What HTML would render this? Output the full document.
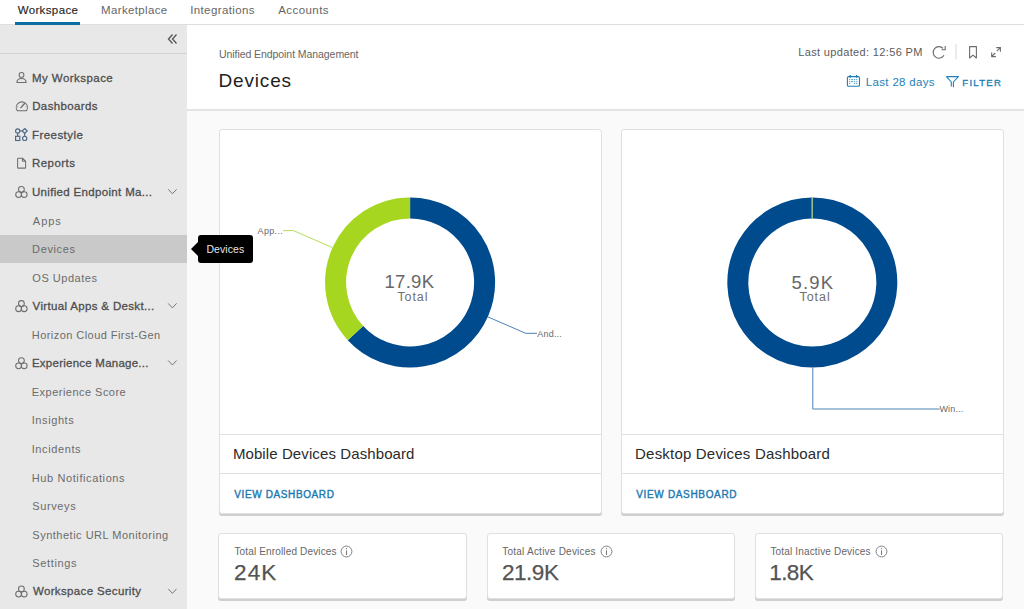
<!DOCTYPE html>
<html><head><meta charset="utf-8"><style>
*{margin:0;padding:0;box-sizing:border-box}
html,body{width:1024px;height:609px;overflow:hidden;background:#fafafa;font-family:"Liberation Sans",sans-serif}
.a{position:absolute}
.t{position:absolute;white-space:nowrap}
#nav{position:absolute;left:0;top:0;width:1024px;height:25px;background:#fff;border-bottom:1px solid #dedede}
#ul{position:absolute;left:15px;top:22px;width:65px;height:3px;background:#0b6fa4}
#side{position:absolute;left:0;top:25px;width:187px;height:584px;background:#e8e8e8}
#colb{position:absolute;left:0;top:53px;width:187px;height:1px;background:#d2d2d2}
#sel{position:absolute;left:0;top:234.6px;width:187px;height:28.5px;background:#c9c9c9}
#hdr{position:absolute;left:187px;top:25px;width:837px;height:86px;background:#fff;border-bottom:2px solid #e3e3e3}
.card{position:absolute;background:#fff;border:1px solid #e0e0e0;border-radius:3px;box-shadow:0 2px 0 #cfcfcf}
.hl{position:absolute;height:1px;background:#e2e2e2}
#tip{position:absolute;left:198px;top:235.2px;width:55px;height:28px;background:#000;border-radius:3px}
#tiparr{position:absolute;left:191px;top:242px;width:0;height:0;border-top:7px solid transparent;border-bottom:7px solid transparent;border-right:7.5px solid #000}
</style></head><body>
<div id="nav"></div><div id="ul"></div>
<div id="side"></div><div id="colb"></div><div id="sel"></div>
<svg class="a" style="left:166px;top:33px" width="13" height="12" viewBox="0 0 13 12"><path d="M6.5 1.5 L2.5 6 L6.5 10.5 M10.5 1.5 L6.5 6 L10.5 10.5" fill="none" stroke="#555" stroke-width="1.3"/></svg>
<svg class="a" style="left:0;top:0" width="187" height="609"><circle cx="21.5" cy="74.90" r="2.4" fill="none" stroke="#6e6e6e" stroke-width="1.05"/><path d="M16.9 82.40 C16.9 79.70 19 78.40 21.5 78.40 C24 78.40 26.1 79.70 26.1 82.40 V82.40 H16.9 Z" fill="none" stroke="#6e6e6e" stroke-width="1.05" stroke-linejoin="round"/><path d="M17.4 110.84 A5.6 5.6 0 1 1 26.3 110.84 Z" fill="none" stroke="#6e6e6e" stroke-width="1.05" stroke-linejoin="round"/><path d="M20.9 107.64 L24.3 103.84" stroke="#6e6e6e" stroke-width="1.4" stroke-linecap="round"/><path d="M21.85 101.84 V102.74 M17.2 106.84 H18.2 M25.5 106.84 H26.5 M18.4 103.44 L19 104.04 M25.3 103.44 L24.7 104.04" stroke="#6e6e6e" stroke-width="0.8"/><g fill="none" stroke="#4b6984" stroke-width="1.15"><circle cx="17.7" cy="130.98" r="2.1"/><path d="M24.7 128.48 L27.2 130.98 L24.7 133.48 L22.2 130.98 Z"/><rect x="15.6" y="136.28" width="4.2" height="4.2"/><circle cx="24.7" cy="138.38" r="2.1"/><path d="M19.8 130.98 H22.2 M17.7 133.08 V136.28 M24.7 133.48 V136.28"/></g><path d="M18.3 158.32 H22.6 L25.6 161.32 V167.42 Q25.6 168.12 24.9 168.12 H18.3 Q17.6 168.12 17.6 167.42 V159.02 Q17.6 158.32 18.3 158.32 Z M22.4 158.32 V160.62 Q22.4 161.32 23.1 161.32 H25.6" fill="none" stroke="#6e6e6e" stroke-width="1.05"/><g fill="none" stroke="#6e6e6e" stroke-width="1.05"><circle cx="21.4" cy="189.36" r="2.9"/><circle cx="18.6" cy="194.56" r="2.9"/><circle cx="24.2" cy="194.56" r="2.9"/></g><path d="M168.2 189.26 L172.4 193.76 L176.6 189.26" fill="none" stroke="#777" stroke-width="1"/><g fill="none" stroke="#6e6e6e" stroke-width="1.05"><circle cx="21.4" cy="303.52" r="2.9"/><circle cx="18.6" cy="308.72" r="2.9"/><circle cx="24.2" cy="308.72" r="2.9"/></g><path d="M168.2 303.42 L172.4 307.92 L176.6 303.42" fill="none" stroke="#777" stroke-width="1"/><g fill="none" stroke="#6e6e6e" stroke-width="1.05"><circle cx="21.4" cy="360.60" r="2.9"/><circle cx="18.6" cy="365.80" r="2.9"/><circle cx="24.2" cy="365.80" r="2.9"/></g><path d="M168.2 360.50 L172.4 365.00 L176.6 360.50" fill="none" stroke="#777" stroke-width="1"/><g fill="none" stroke="#6e6e6e" stroke-width="1.05"><circle cx="21.4" cy="588.92" r="2.9"/><circle cx="18.6" cy="594.12" r="2.9"/><circle cx="24.2" cy="594.12" r="2.9"/></g><path d="M168.2 588.82 L172.4 593.32 L176.6 588.82" fill="none" stroke="#777" stroke-width="1"/></svg>
<div id="hdr"></div>
<!-- header icons -->
<svg class="a" style="left:0;top:0" width="1024" height="110">
<g fill="none" stroke="#6c6c6c" stroke-width="1.1">
<path d="M944.0 55.3 A5.8 5.8 0 1 1 943.1 48.3"/>
<path d="M941.5 49.8 H945.2 V46"/>
<path d="M969.6 46.6 H976.4 V58 L973 55.1 L969.6 58 Z" stroke-linejoin="round"/>
<path d="M996.3 47.6 H1000.4 V51.8 M1000.2 47.8 L996.8 51.2 M991.7 52.4 V56.6 H995.9 M991.9 56.4 L995.3 53"/>
</g>
<rect x="955.4" y="44" width="1.1" height="15.5" fill="#dcdcdc"/>
<g fill="none" stroke="#1f7fb6" stroke-width="1.1">
<rect x="847.4" y="76.6" width="12.1" height="9.6" rx="1.3"/>
<path d="M850.2 75 V77.8 M856.6 75 V77.8" stroke-width="1.3"/>
<path d="M946.4 76.6 H958.4 L953.4 82 V87.2 M946.4 76.6 L951.3 82 V86.4" stroke-linejoin="round"/>
</g>
<g fill="#1f7fb6" opacity="0.75">
<rect x="849.1" y="79" width="1.1" height="1.1"/><rect x="851.3" y="79" width="1.8" height="1.1"/><rect x="854.1" y="79" width="1.1" height="1.1"/><rect x="856.2" y="79" width="1.1" height="1.1"/>
<rect x="849.1" y="81" width="1.1" height="1.1"/><rect x="851.3" y="81" width="1.8" height="1.1"/><rect x="854.1" y="81" width="1.1" height="1.1"/><rect x="856.2" y="81" width="1.1" height="1.1"/>
<rect x="849.1" y="82.9" width="1.1" height="1.1"/><rect x="854.1" y="82.9" width="1.1" height="1.1"/><rect x="856.2" y="82.9" width="1.1" height="1.1"/>
</g>
</svg>
<!-- cards -->
<div class="card" style="left:218.5px;top:129.3px;width:383px;height:384.5px"></div>
<div class="hl" style="left:219.5px;top:434.2px;width:381px"></div>
<div class="hl" style="left:219.5px;top:472.8px;width:381px"></div>
<div class="card" style="left:620.7px;top:129.3px;width:383px;height:384.5px"></div>
<div class="hl" style="left:621.7px;top:434.2px;width:381px"></div>
<div class="hl" style="left:621.7px;top:472.8px;width:381px"></div>
<div class="card" style="left:218.4px;top:533.3px;width:249px;height:65.8px"></div>
<div class="card" style="left:487.2px;top:533.3px;width:248px;height:65.8px"></div>
<div class="card" style="left:755.3px;top:533.3px;width:248px;height:65.8px"></div>
<svg class="a" style="left:0;top:0" width="1024" height="609"><path d="M410.10 207.90 A74.50 74.50 0 1 1 355.44 333.02" fill="none" stroke="#004b8d" stroke-width="21"/><path d="M355.44 333.02 A74.50 74.50 0 0 1 410.10 207.90" fill="none" stroke="#a6d620" stroke-width="21"/><path d="M283 230.6 H293.5 L332.2 247.5" fill="none" stroke="#b4dc5a" stroke-width="1"/><path d="M487.9 316.9 L525.7 333.3 H537" fill="none" stroke="#4f82b4" stroke-width="1"/><path d="M812.65 208.10 A74.50 74.50 0 1 1 812.00 208.10" fill="none" stroke="#004b8d" stroke-width="21"/><path d="M811.9 197.6 V219" stroke="#80b84a" stroke-width="1.2"/><path d="M812.8 367.5 V409 H939.7" fill="none" stroke="#4f82b4" stroke-width="1"/></svg>
<svg class="a" style="left:340.30px;top:545.20px" width="13" height="13" viewBox="0 0 13 13"><circle cx="6.5" cy="6.5" r="5.4" fill="none" stroke="#7a7a7a" stroke-width="0.95"/><path d="M6.5 5.4 V9.9" stroke="#7a7a7a" stroke-width="1.1"/><circle cx="6.5" cy="3.7" r="0.65" fill="#7a7a7a"/></svg><svg class="a" style="left:600.10px;top:545.20px" width="13" height="13" viewBox="0 0 13 13"><circle cx="6.5" cy="6.5" r="5.4" fill="none" stroke="#7a7a7a" stroke-width="0.95"/><path d="M6.5 5.4 V9.9" stroke="#7a7a7a" stroke-width="1.1"/><circle cx="6.5" cy="3.7" r="0.65" fill="#7a7a7a"/></svg><svg class="a" style="left:874.70px;top:545.20px" width="13" height="13" viewBox="0 0 13 13"><circle cx="6.5" cy="6.5" r="5.4" fill="none" stroke="#7a7a7a" stroke-width="0.95"/><path d="M6.5 5.4 V9.9" stroke="#7a7a7a" stroke-width="1.1"/><circle cx="6.5" cy="3.7" r="0.65" fill="#7a7a7a"/></svg><div id="tiparr"></div><div id="tip"></div>
<div class="t" id="nav1" style="left:17.65px;top:5.37px;font-size:11.50px;line-height:11.50px;font-weight:400;color:#262626;letter-spacing:0.370px;-webkit-text-stroke:0.15px #262626">Workspace</div>
<div class="t" id="nav2" style="left:101.07px;top:5.37px;font-size:11.50px;line-height:11.50px;font-weight:400;color:#666;letter-spacing:0.348px;">Marketplace</div>
<div class="t" id="nav3" style="left:190.15px;top:5.37px;font-size:11.50px;line-height:11.50px;font-weight:400;color:#666;letter-spacing:0.398px;">Integrations</div>
<div class="t" id="nav4" style="left:278.18px;top:5.37px;font-size:11.50px;line-height:11.50px;font-weight:400;color:#666;letter-spacing:0.446px;">Accounts</div>
<div class="t" id="h1" style="left:219.03px;top:49.41px;font-size:10.50px;line-height:10.50px;font-weight:400;color:#666;letter-spacing:-0.067px;">Unified Endpoint Management</div>
<div class="t" id="h2" style="left:218.47px;top:70.92px;font-size:19.00px;line-height:19.00px;font-weight:400;color:#222;letter-spacing:0.840px;">Devices</div>
<div class="t" id="h3" style="left:798.25px;top:46.89px;font-size:11.00px;line-height:11.00px;font-weight:400;color:#5c5c5c;letter-spacing:0.347px;">Last updated: 12:56 PM</div>
<div class="t" id="h4" style="left:865.87px;top:76.57px;font-size:11.50px;line-height:11.50px;font-weight:400;color:#1f7fb6;letter-spacing:0.321px;">Last 28 days</div>
<div class="t" id="h5" style="left:962.31px;top:78.26px;font-size:9.50px;line-height:9.50px;font-weight:400;color:#1f7fb6;letter-spacing:1.287px;-webkit-text-stroke:0.35px #1f7fb6">FILTER</div>
<div class="t" id="s0" style="left:31.92px;top:72.57px;font-size:11.50px;line-height:11.50px;font-weight:400;color:#4e4e4e;letter-spacing:0.454px;-webkit-text-stroke:0.3px #4e4e4e">My Workspace</div>
<div class="t" id="s1" style="left:32.20px;top:101.11px;font-size:11.50px;line-height:11.50px;font-weight:400;color:#4e4e4e;letter-spacing:0.375px;-webkit-text-stroke:0.3px #4e4e4e">Dashboards</div>
<div class="t" id="s2" style="left:31.96px;top:129.65px;font-size:11.50px;line-height:11.50px;font-weight:400;color:#4e4e4e;letter-spacing:0.453px;-webkit-text-stroke:0.3px #4e4e4e">Freestyle</div>
<div class="t" id="s3" style="left:31.96px;top:158.19px;font-size:11.50px;line-height:11.50px;font-weight:400;color:#4e4e4e;letter-spacing:0.455px;-webkit-text-stroke:0.3px #4e4e4e">Reports</div>
<div class="t" id="s4" style="left:31.91px;top:186.73px;font-size:11.50px;line-height:11.50px;font-weight:400;color:#4e4e4e;letter-spacing:0.333px;-webkit-text-stroke:0.3px #4e4e4e">Unified Endpoint Ma...</div>
<div class="t" id="s5" style="left:32.87px;top:215.69px;font-size:11.00px;line-height:11.00px;font-weight:400;color:#6b6b6b;letter-spacing:0.951px;">Apps</div>
<div class="t" id="s6" style="left:32.09px;top:244.23px;font-size:11.00px;line-height:11.00px;font-weight:400;color:#6b6b6b;letter-spacing:0.623px;">Devices</div>
<div class="t" id="s7" style="left:32.32px;top:272.77px;font-size:11.00px;line-height:11.00px;font-weight:400;color:#6b6b6b;letter-spacing:0.516px;">OS Updates</div>
<div class="t" id="s8" style="left:32.60px;top:300.89px;font-size:11.50px;line-height:11.50px;font-weight:400;color:#4e4e4e;letter-spacing:0.338px;-webkit-text-stroke:0.3px #4e4e4e">Virtual Apps &amp; Deskt...</div>
<div class="t" id="s9" style="left:31.82px;top:329.85px;font-size:11.00px;line-height:11.00px;font-weight:400;color:#6b6b6b;letter-spacing:0.441px;">Horizon Cloud First-Gen</div>
<div class="t" id="s10" style="left:31.96px;top:357.97px;font-size:11.50px;line-height:11.50px;font-weight:400;color:#4e4e4e;letter-spacing:0.240px;-webkit-text-stroke:0.3px #4e4e4e">Experience Manage...</div>
<div class="t" id="s11" style="left:31.82px;top:386.93px;font-size:11.00px;line-height:11.00px;font-weight:400;color:#6b6b6b;letter-spacing:0.471px;">Experience Score</div>
<div class="t" id="s12" style="left:31.70px;top:415.47px;font-size:11.00px;line-height:11.00px;font-weight:400;color:#6b6b6b;letter-spacing:0.592px;">Insights</div>
<div class="t" id="s13" style="left:31.70px;top:444.01px;font-size:11.00px;line-height:11.00px;font-weight:400;color:#6b6b6b;letter-spacing:0.609px;">Incidents</div>
<div class="t" id="s14" style="left:31.82px;top:472.55px;font-size:11.00px;line-height:11.00px;font-weight:400;color:#6b6b6b;letter-spacing:0.600px;">Hub Notifications</div>
<div class="t" id="s15" style="left:32.36px;top:501.09px;font-size:11.00px;line-height:11.00px;font-weight:400;color:#6b6b6b;letter-spacing:0.596px;">Surveys</div>
<div class="t" id="s16" style="left:32.36px;top:529.63px;font-size:11.00px;line-height:11.00px;font-weight:400;color:#6b6b6b;letter-spacing:0.498px;">Synthetic URL Monitoring</div>
<div class="t" id="s17" style="left:32.36px;top:558.17px;font-size:11.00px;line-height:11.00px;font-weight:400;color:#6b6b6b;letter-spacing:0.628px;">Settings</div>
<div class="t" id="s18" style="left:32.92px;top:586.29px;font-size:11.50px;line-height:11.50px;font-weight:400;color:#4e4e4e;letter-spacing:0.358px;-webkit-text-stroke:0.3px #4e4e4e">Workspace Security</div>
<div class="t" id="tipt" style="left:206.47px;top:244.01px;font-size:10.50px;line-height:10.50px;font-weight:400;color:#e6e6e6;letter-spacing:0.061px;">Devices</div>
<div class="t" id="c1a" style="left:384.43px;top:273.24px;font-size:18.50px;line-height:18.50px;font-weight:400;color:#676767;letter-spacing:0.314px;">17.9K</div>
<div class="t" id="c1b" style="left:397.40px;top:291.42px;font-size:12.50px;line-height:12.50px;font-weight:400;color:#707070;letter-spacing:0.923px;">Total</div>
<div class="t" id="c2a" style="left:791.61px;top:273.54px;font-size:18.50px;line-height:18.50px;font-weight:400;color:#676767;letter-spacing:1.155px;">5.9K</div>
<div class="t" id="c2b" style="left:799.40px;top:291.42px;font-size:12.50px;line-height:12.50px;font-weight:400;color:#707070;letter-spacing:1.007px;">Total</div>
<div class="t" id="l1" style="left:257.62px;top:226.78px;font-size:9.00px;line-height:9.00px;font-weight:400;color:#6a6a6a;letter-spacing:0.322px;">App...</div>
<div class="t" id="l2" style="left:537.33px;top:330.08px;font-size:9.00px;line-height:9.00px;font-weight:400;color:#6a6a6a;letter-spacing:0.182px;">And...</div>
<div class="t" id="l3" style="left:939.45px;top:405.38px;font-size:9.00px;line-height:9.00px;font-weight:400;color:#6a6a6a;letter-spacing:0.186px;">Win...</div>
<div class="t" id="ct1" style="left:232.88px;top:446.00px;font-size:15.00px;line-height:15.00px;font-weight:400;color:#2b2b2b;letter-spacing:0.101px;">Mobile Devices Dashboard</div>
<div class="t" id="ct2" style="left:635.09px;top:446.00px;font-size:15.00px;line-height:15.00px;font-weight:400;color:#2b2b2b;letter-spacing:0.194px;">Desktop Devices Dashboard</div>
<div class="t" id="vd1" style="left:234.22px;top:490.04px;font-size:10.00px;line-height:10.00px;font-weight:400;color:#1d7ab0;letter-spacing:0.616px;-webkit-text-stroke:0.4px #1d7ab0">VIEW DASHBOARD</div>
<div class="t" id="vd2" style="left:636.22px;top:490.04px;font-size:10.00px;line-height:10.00px;font-weight:400;color:#1d7ab0;letter-spacing:0.666px;-webkit-text-stroke:0.4px #1d7ab0">VIEW DASHBOARD</div>
<div class="t" id="st1" style="left:234.39px;top:546.53px;font-size:10.00px;line-height:10.00px;font-weight:400;color:#666;letter-spacing:0.155px;">Total Enrolled Devices</div>
<div class="t" id="st2" style="left:502.22px;top:546.53px;font-size:10.00px;line-height:10.00px;font-weight:400;color:#666;letter-spacing:0.235px;">Total Active Devices</div>
<div class="t" id="st3" style="left:770.39px;top:546.53px;font-size:10.00px;line-height:10.00px;font-weight:400;color:#666;letter-spacing:0.166px;">Total Inactive Devices</div>
<div class="t" id="sv1" style="left:233.92px;top:561.85px;font-size:22.50px;line-height:22.50px;font-weight:400;color:#545454;letter-spacing:1.212px;-webkit-text-stroke:0.25px #545454">24K</div>
<div class="t" id="sv2" style="left:501.92px;top:561.85px;font-size:22.50px;line-height:22.50px;font-weight:400;color:#545454;letter-spacing:-0.453px;-webkit-text-stroke:0.25px #545454">21.9K</div>
<div class="t" id="sv3" style="left:769.23px;top:561.85px;font-size:22.50px;line-height:22.50px;font-weight:400;color:#545454;letter-spacing:-0.558px;-webkit-text-stroke:0.25px #545454">1.8K</div>
</body></html>
